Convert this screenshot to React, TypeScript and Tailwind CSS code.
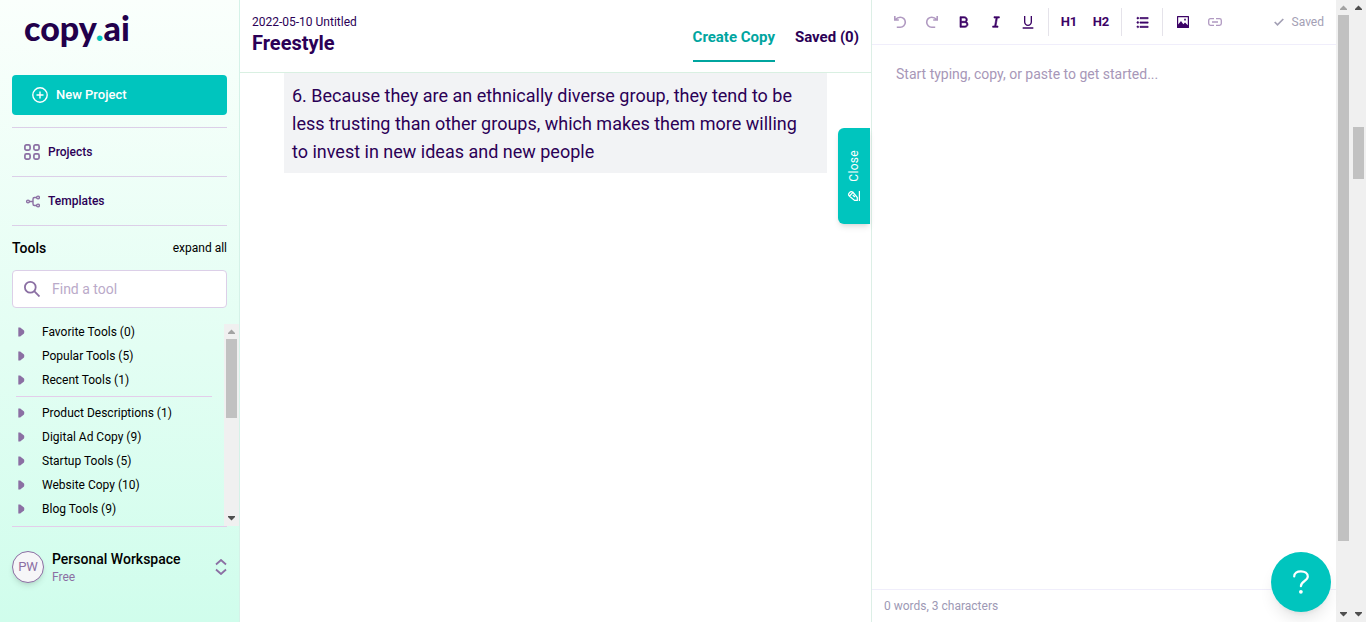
import React from "react";
import { RiBold, RiItalic, RiUnderline, RiListUnordered } from "react-icons/ri";

const pinnedTools = ["Favorite Tools (0)", "Popular Tools (5)", "Recent Tools (1)"];
const toolGroups = [
  "Product Descriptions (1)",
  "Digital Ad Copy (9)",
  "Startup Tools (5)",
  "Website Copy (10)",
  "Blog Tools (9)",
];

function ToolRow({ label }: { label: string }) {
  return (
    <li>
      <button type="button" className="flex h-6 w-full items-center gap-4 pl-1 text-left text-xs">
        <svg viewBox="0 0 10 10" className="size-[10px] text-[#8b6fa3]" fill="currentColor" aria-hidden="true">
          <path d="M2.300 .6h1.900L8 3.600q.6 1.400 0 2.800L4.200 9.400H2.300z" />
        </svg>
        {label}
      </button>
    </li>
  );
}

function Arrow({ up, dim }: { up?: boolean; dim?: boolean }) {
  return (
    <svg
      viewBox="0 0 15 15"
      className={dim ? "size-[15px] shrink-0 text-[#a3a3a3]" : "size-[15px] shrink-0 text-[#4f4f4f]"}
      fill="currentColor"
      aria-hidden="true"
    >
      <path d={up ? "M4 10h7v-1L7.500 5.500 4 9z" : "M4 5h7v1l-3.500 3.500L4 6z"} />
    </svg>
  );
}

function Scrollbar({ thumb, className = "", dimTop }: { thumb: string; className?: string; dimTop?: boolean }) {
  return (
    <div className={`flex w-[15px] shrink-0 flex-col bg-[#f0f0f0] ${className}`} aria-hidden="true">
      <Arrow up dim={dimTop} />
      <div className="flex-1">
        <div className={`mx-auto w-[11px] bg-[#c1c1c1] ${thumb}`} />
      </div>
      <Arrow />
    </div>
  );
}

function ToolButton({ label, faded, children }: { label: string; faded?: boolean; children: React.ReactNode }) {
  return (
    <button
      type="button"
      aria-label={label}
      className={`flex size-8 items-center justify-center text-[13px] font-bold text-[#3c0366] ${faded ? "opacity-40" : ""}`}
    >
      {children}
    </button>
  );
}

function TurnArrow({ flip }: { flip?: boolean }) {
  return (
    <svg
      viewBox="0 0 14 14"
      className={flip ? "size-[14px] -scale-x-100" : "size-[14px]"}
      fill="none"
      stroke="currentColor"
      strokeWidth="1.600"
      aria-hidden="true"
    >
      <path d="M1.800 1v4h4M2.200 4.800C3.500 3.300 5 2.200 7.300 2.200a5 5 0 1 1 0 10H3.800" />
    </svg>
  );
}

function Separator() {
  return <div className="mx-1 h-7 w-px bg-[#e5e3ea]" />;
}

function Sidebar() {
  return (
    <aside className="flex w-60 shrink-0 flex-col border-r border-[#d5f2e8] bg-linear-to-b from-[#fafffc] to-[#d0fdec] pl-3">
      <div className="h-[75px] pl-3 pt-2">
        <a href="#" className="font-[Lato,sans-serif] text-[34px] leading-10 font-black text-[#22004b]">
          copy<span className="text-[#00c5be]">.</span>ai
        </a>
      </div>
      <div className="mr-3">
        <button
          type="button"
          className="flex h-10 w-full items-center gap-2 rounded bg-[#00c5be] pl-5 text-[13px] font-medium text-white"
        >
          <svg viewBox="0 0 16 16" className="size-4" fill="none" stroke="currentColor" strokeWidth="1.400" aria-hidden="true">
            <circle cx="8" cy="8" r="7.200" />
            <path d="M8 4.500v7M4.500 8h7" />
          </svg>
          New Project
        </button>
        <nav className="mt-3 text-xs font-medium text-[#2b0056]">
          <a href="#" className="flex h-[49px] items-center gap-2 border-t border-[#dccfe8] pl-3">
            <svg viewBox="0 0 16 16" className="size-4 text-[#8b6fa3]" fill="none" stroke="currentColor" strokeWidth="1.700" aria-hidden="true">
              <rect x="0.900" y="0.900" width="5.200" height="5.200" rx="1.500" />
              <rect x="9.900" y="0.900" width="5.200" height="5.200" rx="1.500" />
              <rect x="0.900" y="9.900" width="5.200" height="5.200" rx="1.500" />
              <rect x="9.900" y="9.900" width="5.200" height="5.200" rx="1.500" />
            </svg>
            Projects
          </a>
          <a href="#" className="flex h-[50px] items-center gap-2 border-y border-[#dccfe8] pl-3">
            <svg viewBox="0 0 16 16" className="size-4 text-[#8b6fa3]" fill="none" stroke="currentColor" strokeWidth="1.400" aria-hidden="true">
              <circle cx="4" cy="8.500" r="1.400" />
              <circle cx="14" cy="4.500" r="1.400" />
              <circle cx="14" cy="12.500" r="1.400" />
              <path d="M5.400 8.500H9M12.500 4.500h-2q-1.500 0-1.500 1.500v5q0 1.500 1.500 1.500h2" />
            </svg>
            Templates
          </a>
        </nav>
        <div className="flex h-11 items-center justify-between">
          <h2 className="text-sm font-medium text-black">Tools</h2>
          <button type="button" className="text-xs text-black">
            expand all
          </button>
        </div>
        <label className="flex h-[38px] items-center gap-3 rounded border border-[#dccfe8] bg-white pl-[11px]">
          <svg viewBox="0 0 16 16" className="size-4 shrink-0 text-[#8b6fa3]" fill="none" stroke="currentColor" strokeWidth="1.800" aria-hidden="true">
            <circle cx="6.300" cy="6.300" r="5.400" />
            <path d="M10.200 10.200l5.300 5.300" />
          </svg>
          <input
            type="search"
            aria-label="Find a tool"
            placeholder="Find a tool"
            className="w-full min-w-0 bg-transparent text-sm outline-none placeholder:text-[#baaac9]"
          />
        </label>
      </div>
      <div className="mt-3 flex h-[206px] overflow-hidden text-black">
        <div className="min-w-0 flex-1">
          <ul>
            {pinnedTools.map((t) => (
              <ToolRow key={t} label={t} />
            ))}
          </ul>
          <hr className="my-1 mr-3 ml-1 border-[#e3cdea]" />
          <ul>
            {toolGroups.map((t) => (
              <ToolRow key={t} label={t} />
            ))}
          </ul>
        </div>
        <Scrollbar thumb="h-[79px]" className="mt-1" dimTop />
      </div>
      <button
        type="button"
        className="mr-3 flex h-20 items-center gap-2 border-t border-[#e3cdea] text-left"
      >
        <span className="flex size-8 items-center justify-center rounded-full border border-[#8b6fa3] bg-[#f6f6f8] text-[13px] text-[#8b6fa3] shadow-md">
          PW
        </span>
        <span className="flex-1">
          <span className="block text-sm leading-5 font-medium text-black">Personal Workspace</span>
          <span className="block text-xs leading-4 text-[#8b6fa3]">Free</span>
        </span>
        <svg viewBox="0 0 12 16" className="h-4 w-3 text-[#8b6fa3]" fill="none" stroke="currentColor" strokeWidth="1.800" aria-hidden="true">
          <path d="M1 5.500L6 1l5 4.500M1 10.500L6 15l5-4.500" />
        </svg>
      </button>
    </aside>
  );
}

function CopyPane() {
  return (
    <main className="relative min-w-0 flex-1 text-[#2b0056]">
      <header className="flex h-[73px] justify-between border-b border-[#d9f0e2] px-3">
        <div className="pt-[14px]">
          <p className="text-xs leading-4">2022-05-10 Untitled</p>
          <h1 className="text-xl leading-[26px] font-bold">Freestyle</h1>
        </div>
        <nav className="flex items-start gap-5 pt-[14px] text-[15px] font-bold">
          <a href="#" className="flex h-12 items-center border-b-2 border-[#00a59f] text-[#00a59f]">
            Create Copy
          </a>
          <a href="#" className="flex h-12 items-center border-b-2 border-transparent">
            Saved (0)
          </a>
        </nav>
      </header>
      <p className="mx-11 bg-[#f2f3f5] pt-[9px] pr-5 pb-[7px] pl-2 text-lg leading-7">
        6. Because they are an ethnically diverse group, they tend to be less trusting than other groups, which makes
        them more willing to invest in new ideas and new people
      </p>
      <button
        type="button"
        className="absolute top-32 right-px flex h-24 w-8 flex-col items-center justify-center gap-2 rounded-l-md bg-[#00c5be] text-xs text-white shadow-md"
      >
        <span className="rotate-180 tracking-wide [writing-mode:vertical-rl]">Close</span>
        <svg viewBox="0 0 14 12" className="h-3 w-[14px]" fill="none" stroke="currentColor" strokeWidth="1.200" aria-hidden="true">
          <path d="M12.400 1v10M10.300 10.400H7.600L2.300 6Q.8 4.500 2.300 2.800T5.800 2L10.300 7.500zM2.600 6L6 2.400M5.800 5l2 2" />
        </svg>
      </button>
    </main>
  );
}

function Editor() {
  return (
    <section className="flex w-[465px] shrink-0 flex-col border-l border-[#dcefe6]">
      <div className="flex h-[45px] items-center border-b border-[#f0eefb] px-3">
        <ToolButton label="Undo" faded>
          <TurnArrow />
        </ToolButton>
        <ToolButton label="Redo" faded>
          <TurnArrow flip />
        </ToolButton>
        <ToolButton label="Bold">
          <RiBold className="size-4" stroke="currentColor" strokeWidth="1" />
        </ToolButton>
        <ToolButton label="Italic">
          <RiItalic className="size-4" stroke="currentColor" strokeWidth="1" />
        </ToolButton>
        <ToolButton label="Underline">
          <RiUnderline className="size-4" />
        </ToolButton>
        <Separator />
        <ToolButton label="Heading 1">H1</ToolButton>
        <ToolButton label="Heading 2">H2</ToolButton>
        <Separator />
        <ToolButton label="Bulleted list">
          <RiListUnordered className="size-[15px]" stroke="currentColor" strokeWidth="1" />
        </ToolButton>
        <Separator />
        <ToolButton label="Insert image">
          <svg viewBox="0 0 12 12" className="size-3" fill="currentColor" aria-hidden="true">
            <path fillRule="evenodd" d="M.6 0h10.800q.6 0 .6.6v10.800q0 .6-.6.6H.6Q0 12 0 11.400V.6Q0 0 .6 0zM1.200 1.200v7.400L4 5l2.300 3.200L8 6.400l2.800 2.800V1.200zM7.200 2.800h1.600v1.600H7.200z" />
          </svg>
        </ToolButton>
        <ToolButton label="Insert link" faded>
          <svg viewBox="0 0 14 8" className="h-2 w-[14px]" fill="none" stroke="currentColor" strokeWidth="1.300" aria-hidden="true">
            <path d="M6 .7H2.500Q.7.700.7 2.500v3q0 1.800 1.800 1.800H6M8 .7h3.500q1.800 0 1.800 1.800v3q0 1.800-1.800 1.800H8M4 4h6" />
          </svg>
        </ToolButton>
        <span className="ml-auto flex items-center gap-2 text-xs text-[#a3a0b5]">
          <svg viewBox="0 0 10 8" className="h-2 w-[10px]" fill="none" stroke="currentColor" strokeWidth="1.700" aria-hidden="true">
            <path d="M.7 4l2.800 2.800L9.300 1" />
          </svg>
          Saved
        </span>
      </div>
      <textarea
        aria-label="Document"
        placeholder="Start typing, copy, or paste to get started..."
        className="w-full flex-1 resize-none px-6 py-5 text-sm leading-[18px] outline-none placeholder:text-[#a797b8]"
      />
      <footer className="flex h-[33px] items-center border-t border-[#f0eefb] px-3 text-xs text-[#9d99b5]">
        0 words, 3 characters
      </footer>
    </section>
  );
}

export default function App() {
  return (
    <div className="flex h-screen overflow-hidden bg-white font-[Roboto,sans-serif]">
      <Sidebar />
      <CopyPane />
      <Editor />
      <Scrollbar thumb="h-[526px]" dimTop />
      <Scrollbar thumb="mt-28 h-[52px]" />
      <button
        type="button"
        aria-label="Help"
        className="fixed right-[35px] bottom-[10px] flex size-[60px] items-center justify-center rounded-full bg-[#00c5be] text-white shadow-lg"
      >
        <svg viewBox="0 0 16 24" className="h-6 w-4" fill="none" stroke="currentColor" strokeWidth="2.200" strokeLinecap="round" aria-hidden="true">
          <path d="M1.200 6.500C1.200 3 4 1.300 7.900 1.300s6.900 2 6.900 5.300c0 4.500-6.900 4.400-6.900 9.600" />
          <circle cx="7.900" cy="21.800" r="1.900" fill="currentColor" stroke="none" />
        </svg>
      </button>
    </div>
  );
}
